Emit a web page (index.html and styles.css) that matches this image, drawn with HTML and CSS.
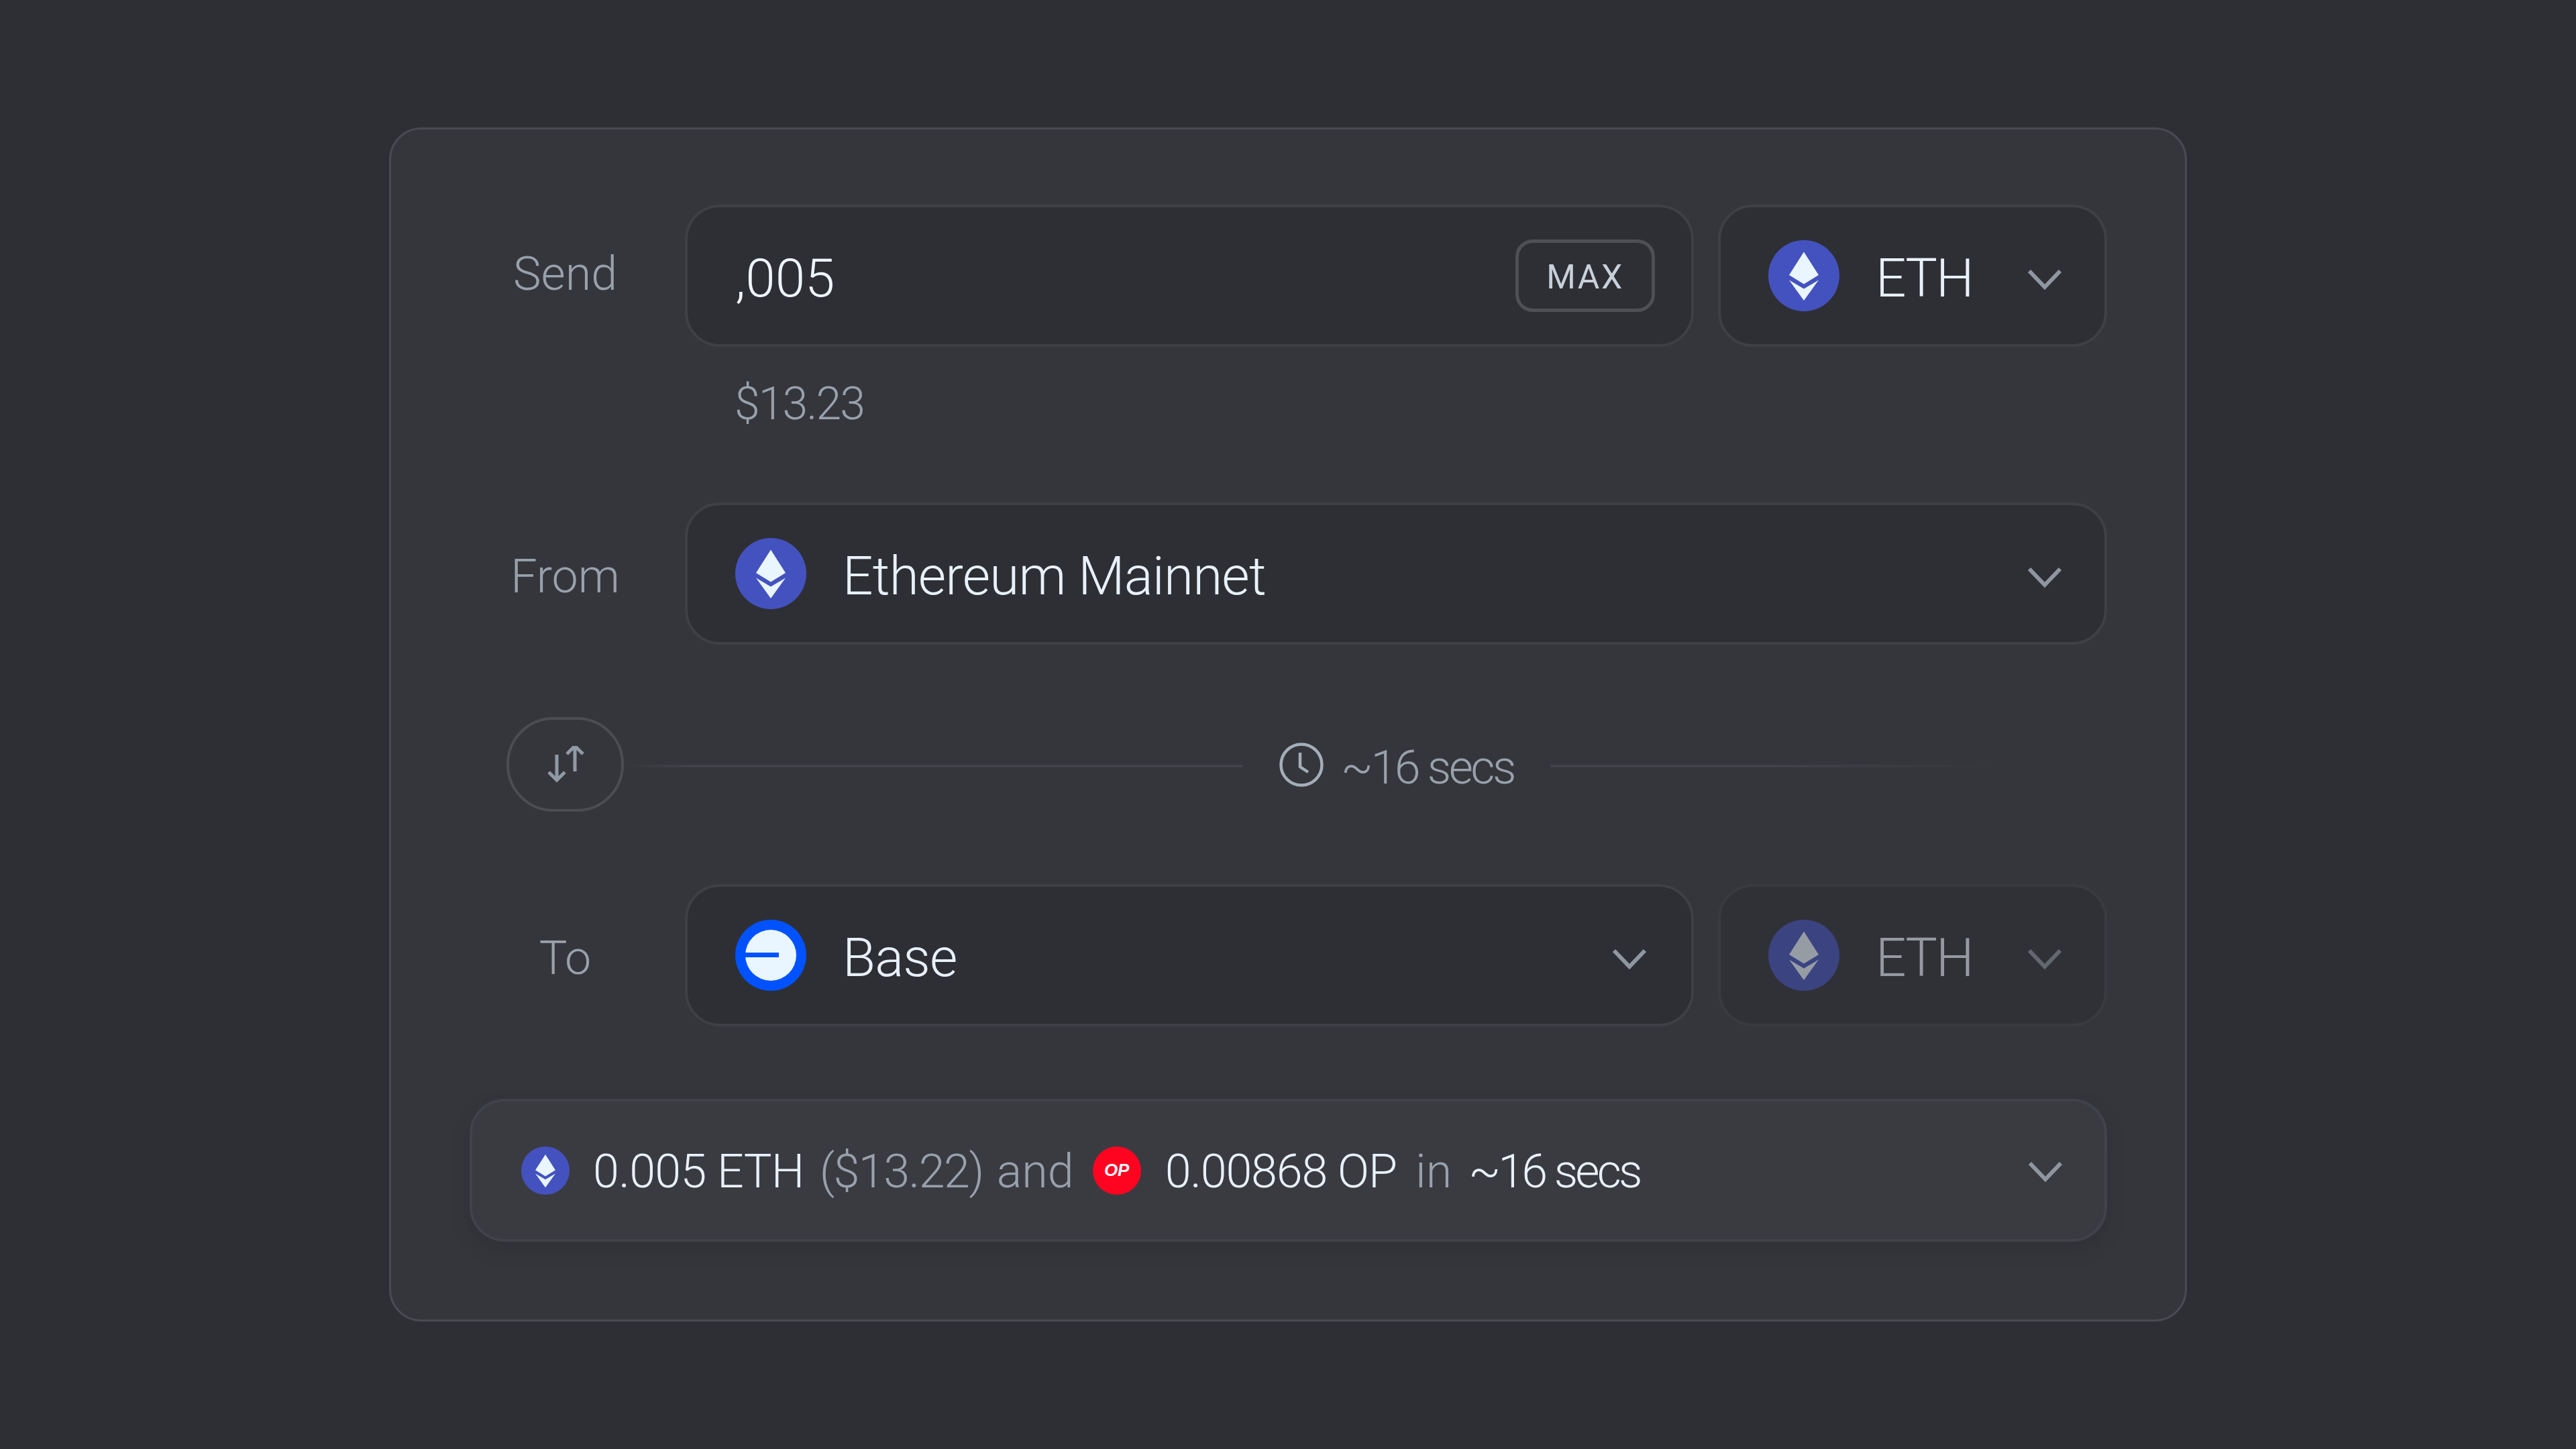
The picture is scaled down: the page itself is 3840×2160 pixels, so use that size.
FILE: index.html
```html
<!DOCTYPE html>
<html lang="en">
<head>
<meta charset="utf-8">
<title>Bridge</title>
<link rel="stylesheet" href="styles.css">
</head>
<body>
<svg class="defs" width="0" height="0" aria-hidden="true">
  <symbol id="eth" viewBox="0 0 106 106">
    <circle cx="53" cy="53" r="53" fill="#4452bf"/>
    <path d="M53 17.5 L75 52 L53 65.5 L31 52 Z" fill="#e9f5ff"/>
    <path d="M31 59.5 L53 72.5 L75 59.5 L53 90 Z" fill="#e9f5ff"/>
  </symbol>
  <symbol id="chev" viewBox="0 0 52 32">
    <path d="M3 3 L26 27 L49 3" fill="none" stroke="currentColor" stroke-width="6"/>
  </symbol>
</svg>
<main class="card">
  <section class="block">
    <div class="row">
      <div class="label label-up">Send</div>
      <div class="field field-grow">
        <div class="amount">,005</div>
        <button class="max">MAX</button>
      </div>
      <div class="field token">
        <svg class="coin"><use href="#eth"/></svg>
        <span class="name name-token">ETH</span>
        <svg class="chev"><use href="#chev"/></svg>
      </div>
    </div>
    <div class="usd">$13.23</div>
  </section>
  <div class="row">
    <div class="label">From</div>
    <div class="field field-grow">
      <svg class="coin"><use href="#eth"/></svg>
      <span class="name name-grow">Ethereum Mainnet</span>
      <svg class="chev"><use href="#chev"/></svg>
    </div>
  </div>
  <div class="row swap-row">
    <button class="swap" aria-label="Swap">
      <svg class="swap-icon" viewBox="0 0 60 60" width="60" height="60"><path d="M14 13 V51 M2 39 L14 51 L26 39 M41 0 V38 M29 12 L41 0 L53 12" fill="none" stroke="#8f9aa6" stroke-width="5"/></svg>
    </button>
    <div class="timeline">
      <div class="line line-left"></div>
      <svg class="clock" viewBox="0 0 66 66" width="66" height="66"><circle cx="33" cy="33" r="30.5" fill="none" stroke="#a3aeb9" stroke-width="4.5"/><path d="M31 15 V36 L43 44" fill="none" stroke="#a3aeb9" stroke-width="4.5"/></svg>
      <span class="eta">~16 secs</span>
      <div class="line line-right"></div>
    </div>
  </div>
  <div class="row">
    <div class="label">To</div>
    <div class="field field-grow">
      <svg class="coin" viewBox="0 0 106 106"><circle cx="53" cy="53" r="53" fill="#0052ff"/><circle cx="53" cy="53" r="38" fill="#e9f5ff"/><rect x="15" y="49" width="50" height="7" fill="#0052ff"/></svg>
      <span class="name name-grow">Base</span>
      <svg class="chev chev-base"><use href="#chev"/></svg>
    </div>
    <div class="field token token-off">
      <svg class="coin"><use href="#eth"/></svg>
      <span class="name name-token">ETH</span>
      <svg class="chev"><use href="#chev"/></svg>
    </div>
  </div>
  <div class="summary">
    <svg class="mini"><use href="#eth"/></svg>
    <span class="strong s-eth">0.005 ETH</span>
    <span class="muted s-usd">($13.22)</span>
    <span class="muted s-and">and</span>
    <span class="op">OP</span>
    <span class="strong s-op">0.00868 OP</span>
    <span class="muted s-in">in</span>
    <span class="strong s-time">~16 secs</span>
    <svg class="chev chev-end"><use href="#chev"/></svg>
  </div>
</main>
</body>
</html>
```
FILE: styles.css
```css
* { box-sizing: border-box; }
html, body { margin: 0; height: 100%; }
body {
  background: #2e2f34;
  font-family: Roboto, "Liberation Sans", sans-serif;
  font-weight: 350;
  display: flex;
  align-items: center;
  justify-content: center;
  width: 3840px;
  height: 2160px;
}
.defs { position: absolute; }
.card {
  width: 2680px;
  height: 1780px;
  background: #35363b;
  border: 3px solid #4a4b52;
  border-radius: 48px;
  padding: 112px 116px 0 117px;
  display: flex;
  flex-direction: column;
  gap: 108px;
}
.block { display: flex; flex-direction: column; }
.row { display: flex; align-items: center; gap: 40px; height: 212px; flex: none; }
.label { width: 281px; text-align: center; font-size: 70px; color: #98a1ac; flex: none; padding: 8px 0 0 4px; }
.label-up { margin-top: -14px; }
.field {
  height: 212px;
  background: #2e2f34;
  border: 4px solid #3f4046;
  border-radius: 52px;
  display: flex;
  align-items: center;
  padding-left: 71px;
  color: #e8f1fb;
}
.field-grow { flex: 1; min-width: 0; padding-right: 54px; }
.token { width: 580px; flex: none; margin-left: -4px; }
.token-off { background: #303136; border-color: #3a3b41; }
.token-off > * { opacity: 0.55; }
.amount { flex: 1; font-size: 80px; color: #eef5fd; padding-top: 8px; }
.max {
  width: 208px;
  height: 108px;
  background: transparent;
  border: 5px solid #4f5056;
  border-radius: 26px;
  color: #c8d0da;
  font: 400 50px Roboto, sans-serif;
  letter-spacing: 2.5px;
  padding: 4px 0 0;
}
.coin { width: 106px; height: 106px; flex: none; }
.name { font-size: 80px; margin-left: 54px; padding-top: 8px; letter-spacing: -0.8px; }
.name-grow { flex: 1; }
.name-token { flex: 1; letter-spacing: -2px; }
.chev { width: 52px; height: 32px; color: #8e96a0; flex: none; margin-top: 12px; }
.token .chev { margin-right: 63px; }
.field-grow .chev { margin-right: 9px; }
.field-grow .chev-base { margin-right: 12px; }
.usd { font-size: 68px; color: #98a1ac; margin-left: 395px; height: 124px; padding-top: 40px; line-height: 90px; letter-spacing: -2px; }
.swap-row { height: 141px; gap: 0; }
.swap {
  width: 175px;
  height: 141px;
  margin-left: 55px;
  background: transparent;
  border: 4px solid #4c4d53;
  border-radius: 70px;
  padding: 4px 0 0;
  display: flex;
  align-items: center;
  justify-content: center;
  flex: none;
}
.swap-icon { margin-left: 6px; }
.timeline { flex: 1; display: flex; align-items: center; padding-top: 4px; }
.line { height: 4px; }
.line-left { width: 922px; margin-right: 55px; background: linear-gradient(90deg, #35363b, #414249 10%); }
.line-right { flex: 1; margin-left: 54px; background: linear-gradient(90deg, #414249 40%, #35363b 80%); }
.clock { flex: none; margin-top: -4px; }
.eta { font-size: 70px; color: #98a1ac; margin-left: 26px; letter-spacing: -3.5px; padding-top: 4px; }
.summary {
  height: 213px;
  background: #3a3b41;
  border: 4px solid #41434a;
  border-radius: 52px;
  box-shadow: 0 12px 24px rgba(40, 41, 46, 0.35);
  display: flex;
  align-items: center;
  padding-left: 73px;
  font-size: 70px;
  color: #e8f1fb;
}
.mini { width: 72px; height: 72px; flex: none; }
.strong { color: #e8f1fb; padding-top: 2px; }
.muted { color: #98a1ac; padding-top: 2px; }
.s-eth { margin-left: 35px; letter-spacing: -0.7px; }
.s-usd { margin-left: 23px; letter-spacing: -1.5px; }
.s-and { margin-left: 20px; }
.op {
  width: 72px;
  height: 72px;
  margin-left: 28px;
  border-radius: 50%;
  background: #ff0420;
  color: #e9f5ff;
  font: italic 700 26px "Liberation Sans", sans-serif;
  display: flex;
  align-items: center;
  justify-content: center;
  flex: none;
}
.s-op { margin-left: 36px; letter-spacing: -1.2px; }
.s-in { margin-left: 28px; }
.s-time { margin-left: 25px; letter-spacing: -3.8px; }
.chev-end { margin-left: auto; margin-right: 62px; margin-top: 4px; }
```
